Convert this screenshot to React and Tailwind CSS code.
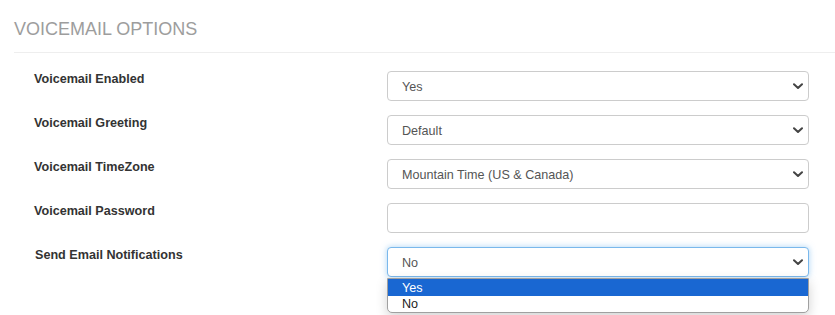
import React from "react";

function Chevron() {
  return (
    <svg width="10" height="7" viewBox="0 0 10 7" className="shrink-0">
      <path d="M1 1.2 L5 5 L9 1.2" fill="none" stroke="#444" strokeWidth="2" strokeLinecap="round" strokeLinejoin="round" />
    </svg>
  );
}

function SelectBox({ value, focused }) {
  return (
    <div
      className={
        "flex h-[30px] w-[422px] items-center justify-between rounded-[4px] border bg-white pl-[14px] pr-[5px] text-[12.6px] text-[#555] " +
        (focused
          ? "border-[#7ab8ec] shadow-[0_0_6px_rgba(102,175,233,0.55)]"
          : "border-[#cccccc]")
      }
    >
      <span className="pt-px leading-[14px]">{value}</span>
      <Chevron />
    </div>
  );
}

function Row({ label, children, shift }) {
  return (
    <div className="flex items-start">
      <div className={"w-[353px] pt-px text-[12.6px] font-bold leading-[14px] text-[#333] " + (shift ? "pl-px" : "")}>
        {label}
      </div>
      {children}
    </div>
  );
}

export default function App() {
  return (
    <div
      className="relative h-[315px] w-[835px] overflow-hidden bg-white"
      style={{ fontFamily: '"Liberation Sans", Arial, sans-serif' }}
    >
      <div className="ml-[14px] border-b border-[#eeeeee] pt-[19px] pb-[13px]">
        <h2 className="text-[18px] font-normal leading-[20px] text-[#9d9d9d]">VOICEMAIL OPTIONS</h2>
      </div>
      <div className="flex flex-col gap-[14px] pl-[34px] pt-[18px]">
        <Row label="Voicemail Enabled">
          <SelectBox value="Yes" />
        </Row>
        <Row label="Voicemail Greeting">
          <SelectBox value="Default" />
        </Row>
        <Row label="Voicemail TimeZone">
          <SelectBox value="Mountain Time (US & Canada)" />
        </Row>
        <Row label="Voicemail Password">
          <div className="h-[30px] w-[422px] rounded-[4px] border border-[#cccccc] bg-white" />
        </Row>
        <Row label="Send Email Notifications" shift>
          <div className="relative">
            <SelectBox value="No" focused />
            <div className="absolute left-0 top-[31px] w-[422px] overflow-hidden rounded-b-[5px] border border-[#a0a0a0] bg-white text-[12.6px] leading-[16px] shadow-[0_4px_12px_rgba(0,0,0,0.18)]">
              <div className="h-[17px] bg-[#1967d2] pl-[14px] pt-px text-white">Yes</div>
              <div className="h-[16px] pl-[14px] text-[#222]">No</div>
            </div>
          </div>
        </Row>
      </div>
    </div>
  );
}
